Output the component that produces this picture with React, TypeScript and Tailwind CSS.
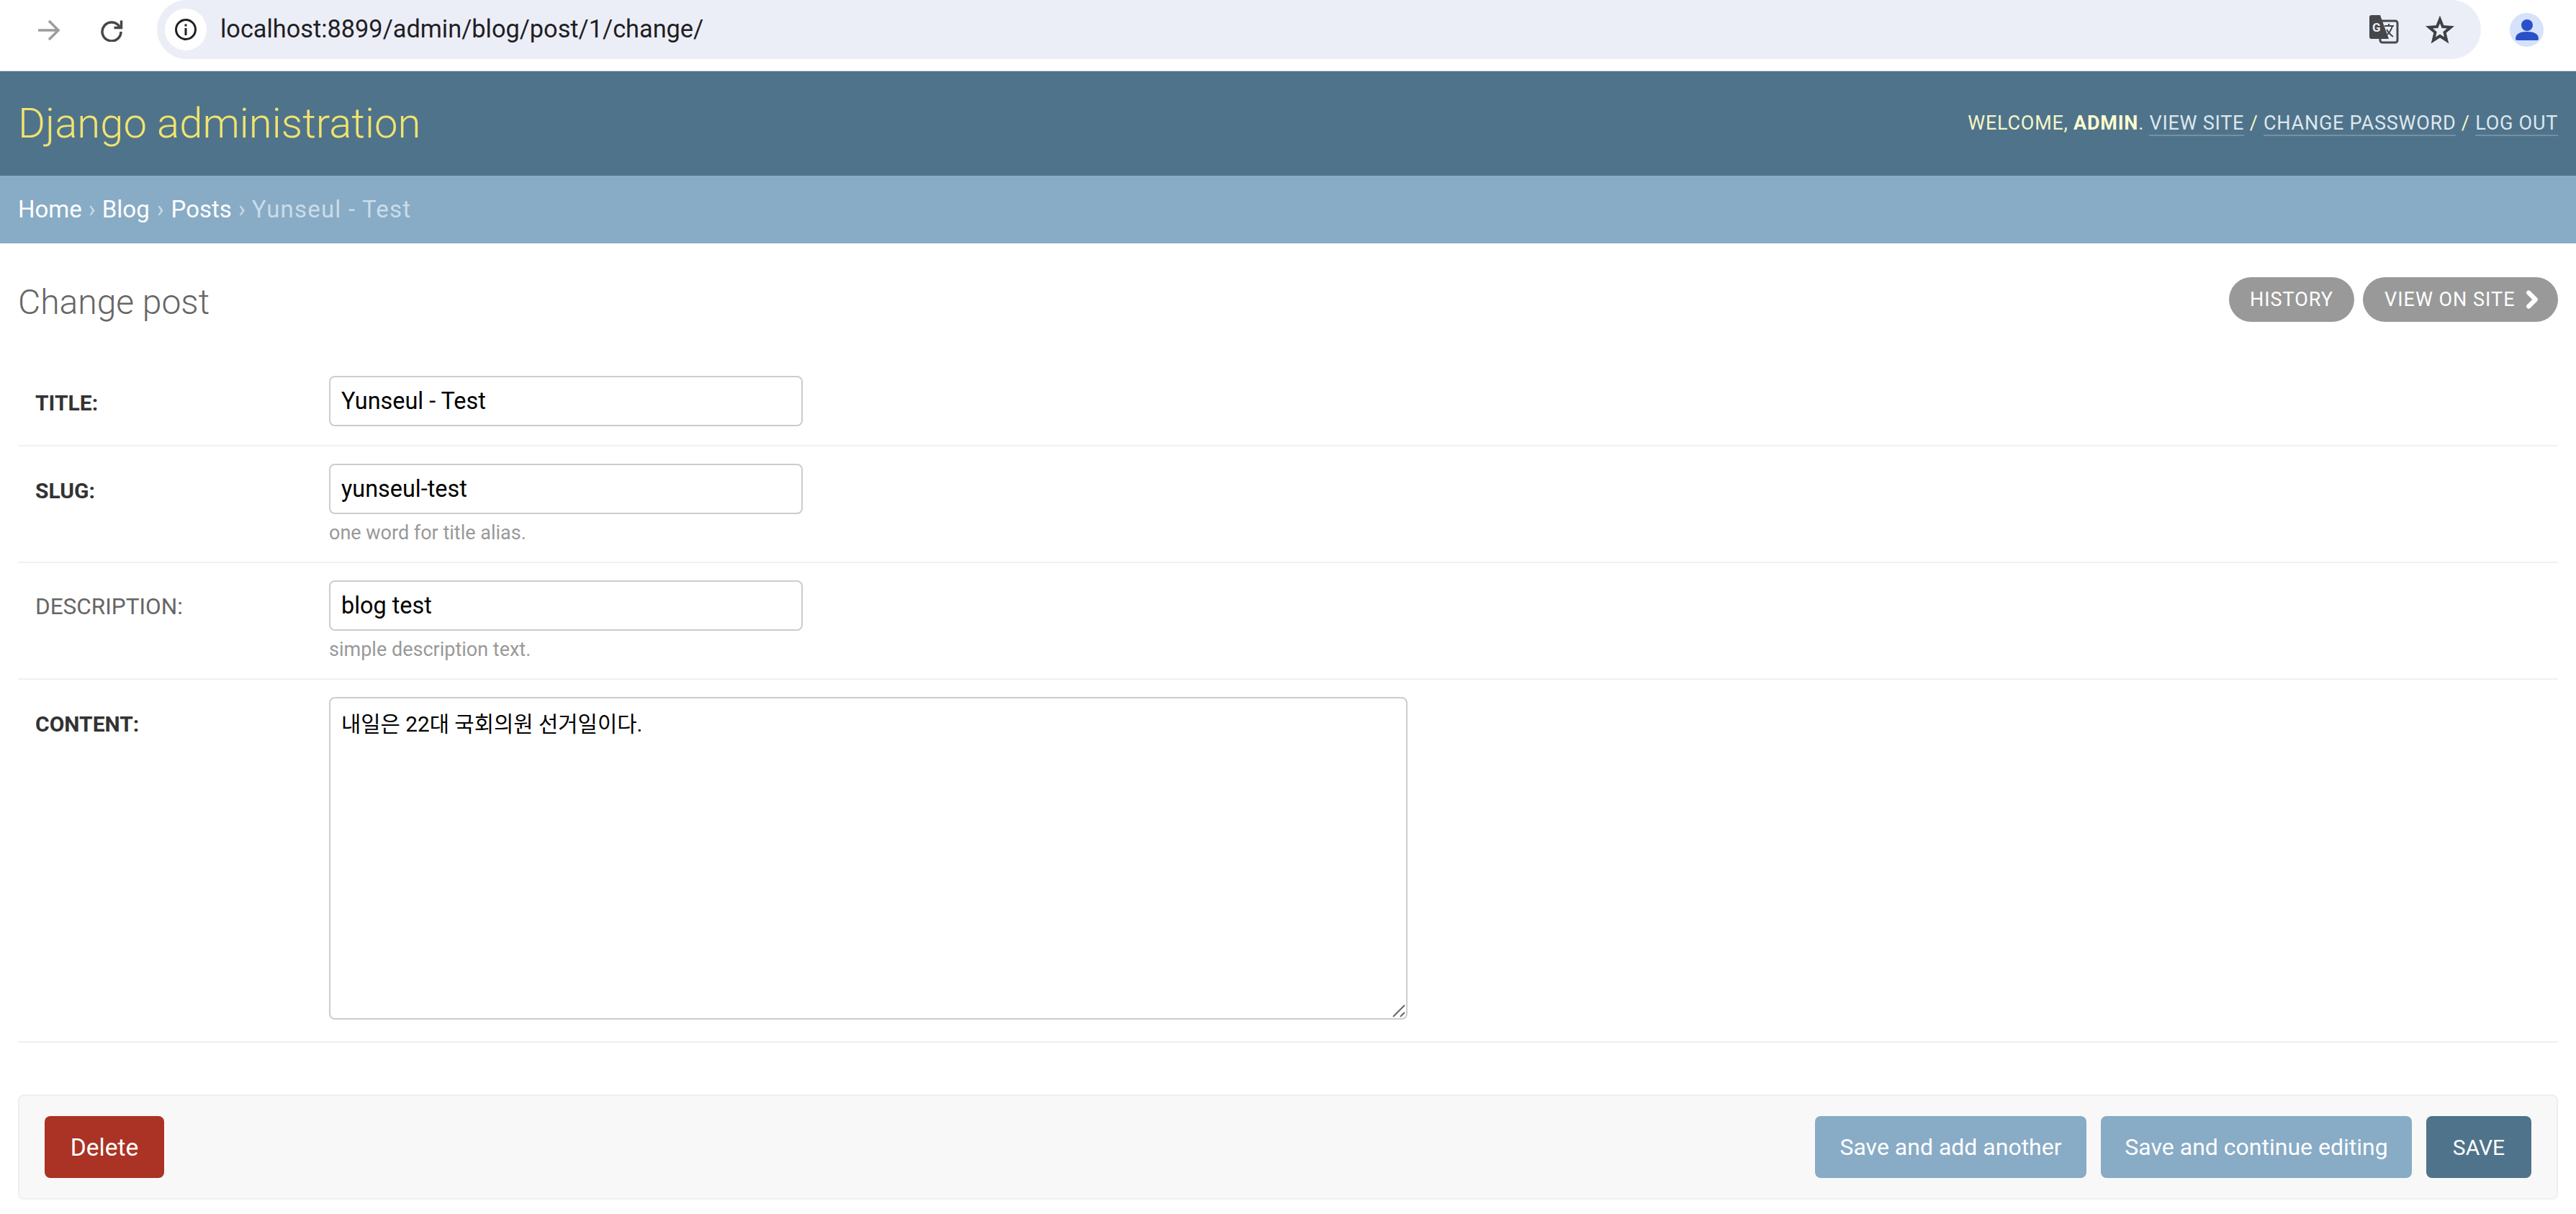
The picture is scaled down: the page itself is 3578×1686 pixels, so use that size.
import { ChevronRight } from "lucide-react";

const sans = "font-['Roboto','Liberation_Sans',sans-serif]";

function TranslateIcon() {
  return (
    <svg viewBox="0 0 41 40" className="h-[40px] w-[41px]">
      <rect x="15" y="8" width="24" height="30" rx="3" fill="#eceef7" stroke="#45474a" strokeWidth="3" />
      <path d="M0 3 a3 3 0 0 1 3 -3 h12 l12 33 h-24 a3 3 0 0 1 -3 -3 z" fill="#45474a" />
      <text x="4" y="23" fontSize="17" fontWeight="700" fill="#eceef7" fontFamily="Roboto, sans-serif">
        G
      </text>
      <path d="M21 15 h13 M27 12 v3 M32 15 c-2 7 -5 11 -10 14 M24 20 c2 4 5 7 9 10" fill="none" stroke="#45474a" strokeWidth="2" />
    </svg>
  );
}

function BrowserBar() {
  return (
    <div className="flex h-[99px] items-start border-b border-[#d9dce0] bg-white pl-[52px]">
      <svg viewBox="0 0 32 30" className="mt-[27px] h-[30px] w-[32px]" fill="none" stroke="#9a9c9f" strokeWidth="3.500">
        <path d="M1 15 H29 M16 2 L29 15 L16 28" />
      </svg>
      <svg viewBox="0 0 32 32" className="ml-[55px] mt-[26px] h-[32px] w-[32px]" fill="none" stroke="#45474a" strokeWidth="3.500">
        <path d="M27 11 A13 13 0 1 0 29 18" />
        <path d="M29.500 2.500 V12.500 H19.500" />
      </svg>
      <div className="ml-[47px] flex h-[82px] w-[3228px] items-center rounded-full bg-[#eceef7] pl-[11px] pr-[37px]">
        <div className="flex h-[58px] w-[58px] items-center justify-center rounded-full bg-white">
          <svg viewBox="0 0 32 32" className="h-[32px] w-[32px]">
            <circle cx="16" cy="16" r="13.500" fill="none" stroke="#1f2023" strokeWidth="3" />
            <rect x="14.500" y="14" width="3" height="10" fill="#1f2023" />
            <rect x="14.500" y="8.500" width="3" height="3" fill="#1f2023" />
          </svg>
        </div>
        <span className={`ml-[19px] text-[34.300px] text-[#1f2023] ${sans}`}>localhost:8899/admin/blog/post/1/change/</span>
        <div className="ml-auto flex items-center gap-[37px]">
          <TranslateIcon />
          <svg viewBox="0 0 40 40" className="h-[40px] w-[40px]" fill="none" stroke="#3f4144" strokeWidth="4" strokeLinejoin="miter">
            <path d="M20 6 L24 16 L35 16.800 L26.500 24 L29.200 35 L20 29 L10.800 35 L13.500 24 L5 16.800 L16 16 Z" />
          </svg>
        </div>
      </div>
      <div className="ml-[40px] mt-[18px] flex h-[47px] w-[47px] items-center justify-center overflow-hidden rounded-full bg-[#d6e2fb]">
        <svg viewBox="0 0 47 47" className="h-[47px] w-[47px]">
          <circle cx="24" cy="17" r="8" fill="#2a50c8" />
          <path d="M8 36 c0 -7 6 -10 16 -10 s16 3 16 10 a2 2 0 0 1 -2 2 h-28 a2 2 0 0 1 -2 -2 z" fill="#2a50c8" />
        </svg>
      </div>
    </div>
  );
}

function Header() {
  return (
    <div className={`flex h-[145px] items-center justify-between bg-[#4f738a] px-[25px] ${sans}`}>
      <h1 className="text-[58px] font-light text-[#f1e36f]">Django administration</h1>
      <div className="text-[27px] uppercase tracking-[0.75px] text-[#f5f5c8]">
        Welcome, <strong className="font-bold text-[#fbfbd0]">admin</strong>.{" "}
        <a className="border-b-[2px] border-[#7390a6] text-[#dde7ee]">View site</a> /{" "}
        <a className="border-b-[2px] border-[#7390a6] text-[#dde7ee]">Change password</a> /{" "}
        <a className="border-b-[2px] border-[#7390a6] text-[#dde7ee]">Log out</a>
      </div>
    </div>
  );
}

function Breadcrumbs() {
  return (
    <div className={`flex h-[94px] items-center bg-[#88abc6] px-[25px] text-[33px] text-[#c9dce8] ${sans}`}>
      <a className="text-white">Home</a>
      <span className="px-[9px]">›</span>
      <a className="text-white">Blog</a>
      <span className="px-[10px]">›</span>
      <a className="text-white">Posts</a>
      <span className="px-[9px]">›</span>
      <span className="tracking-[1.200px]">Yunseul - Test</span>
    </div>
  );
}

function Row(props: { label: string; required?: boolean; value: string; help?: string }) {
  return (
    <div className="flex border-b-[2px] border-[#f0f0f0] pb-[26px] pl-[24px] pt-[24px]">
      <label className={`flex h-[70px] w-[408px] items-center pt-[4px] uppercase ${props.required ? "text-[30px] font-bold text-[#333]" : "text-[31.500px] text-[#666]"}`}>
        {props.label}:
      </label>
      <div>
        <input
          readOnly
          value={props.value}
          className="block h-[70px] w-[658px] rounded-[8px] border-[2px] border-[#cccccc] bg-white px-[15px] text-[32.400px] text-black outline-none"
        />
        {props.help && <div className="mt-[12px] text-[27px] leading-[28px] text-[#999]">{props.help}</div>}
      </div>
    </div>
  );
}

export default function App() {
  return (
    <div className={`min-h-[1686px] bg-white ${sans}`}>
      <BrowserBar />
      <Header />
      <Breadcrumbs />
      <main className="px-[25px]">
        <div className="flex h-[160px] items-start justify-between">
          <h2 className="pt-[54px] text-[48px] leading-[56px] font-light text-[#666]">Change post</h2>
          <div className="flex gap-[12px] pt-[47px]">
            <a className="flex h-[62px] w-[174px] items-center justify-center rounded-full bg-[#999] text-[27px] uppercase tracking-[1px] text-white">History</a>
            <a className="flex h-[62px] w-[271px] items-center rounded-full bg-[#999] pl-[30px] text-[27px] uppercase tracking-[1px] text-white">
              View on site
              <ChevronRight className="ml-[4px] h-[38px] w-[38px]" strokeWidth={4} />
            </a>
          </div>
        </div>
        <Row label="Title" required value="Yunseul - Test" />
        <Row label="Slug" required value="yunseul-test" help="one word for title alias." />
        <Row label="Description" value="blog test" help="simple description text." />
        <div className="flex border-b-[2px] border-[#f0f0f0] pb-[30px] pl-[24px] pt-[24px]">
          <label className="flex h-[74px] w-[408px] items-center text-[30px] font-bold uppercase text-[#333]">Content:</label>
          <div className="relative h-[448px] w-[1498px]">
            <textarea
              readOnly
              value="내일은 22대 국회의원 선거일이다."
              className="block h-full w-full resize-none rounded-[8px] border-[2px] border-[#cccccc] bg-white px-[15px] py-[17px] font-['Roboto','Noto_Sans_CJK_KR',sans-serif] text-[29.700px] leading-[38px] text-black outline-none"
            />
            <svg viewBox="0 0 18 18" className="absolute bottom-[3px] right-[3px] h-[18px] w-[18px]" fill="none" stroke="#666" strokeWidth="2">
              <path d="M1 17 L17 1 M11 17 L17 11" />
            </svg>
          </div>
        </div>
        <div className="mt-[72px] flex h-[146px] items-center justify-between rounded-[8px] border-[2px] border-[#efefef] bg-[#f8f8f8] px-[35px]">
          <a className="flex h-[86px] w-[166px] items-center justify-center rounded-[8px] bg-[#aa3325] pt-[3px] text-[33.500px] text-white">Delete</a>
          <div className="flex gap-[20px]">
            <a className="flex h-[86px] w-[377px] items-center justify-center rounded-[8px] bg-[#88abc6] text-[32px] text-white">Save and add another</a>
            <a className="flex h-[86px] w-[432px] items-center justify-center rounded-[8px] bg-[#88abc6] text-[32px] text-white">Save and continue editing</a>
            <a className="flex h-[86px] w-[146px] items-center justify-center rounded-[8px] bg-[#4f738a] text-[30px] uppercase text-white">Save</a>
          </div>
        </div>
      </main>
    </div>
  );
}
